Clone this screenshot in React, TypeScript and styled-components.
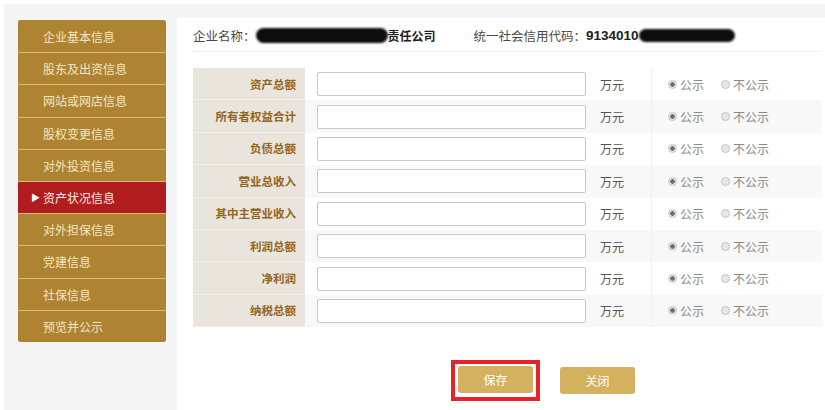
import React from "react";
import styled, { createGlobalStyle } from "styled-components";

const GlobalStyle = createGlobalStyle`
  html, body { margin: 0; padding: 0; background: #ffffff; }
  body {
    font-family: "Noto Sans CJK SC", "Noto Sans", "Liberation Sans", sans-serif;
    font-size: 12px;
    color: #333;
  }
  * { box-sizing: border-box; }
`;

const Frame = styled.div`
  width: 825px;
  height: 410px;
  padding: 4px 0 0 4px;
  background: #ffffff;
  overflow: hidden;
`;

const Shell = styled.div`
  display: flex;
  height: 406px;
  padding-top: 14px;
  background: #f5f5f5;
`;

const Sidebar = styled.aside`
  width: 173px;
  flex: none;
  padding: 2px 11px 0 14px;
`;

const Menu = styled.ul`
  list-style: none;
  margin: 0;
  padding: 0;
  width: 148px;
  border-radius: 3px;
  overflow: hidden;
  background: #ae8432;
`;

const MenuItem = styled.li<{ $active?: boolean }>`
  position: relative;
  height: 32.2px;
  display: flex;
  align-items: center;
  padding-left: 25px;
  font-size: 12px;
  color: ${(p) => (p.$active ? "#fbe9e4" : "#f4e4c2")};
  background: ${(p) => (p.$active ? "#b11c1f" : "#ae8432")};
  & + & {
    border-top: 1px solid #d9bb7c;
  }
`;

const Arrow = styled.span`
  position: absolute;
  left: 13px;
  font-size: 9px;
  color: #ffffff;
`;

const Main = styled.main`
  flex: 1;
  background: #ffffff;
  padding: 0 3px 0 16px;
`;

const Header = styled.div`
  height: 34px;
  display: flex;
  align-items: center;
  border-bottom: 1px solid #efefef;
  font-size: 12.5px;
  color: #4a4a4a;
  padding-top: 2px;
`;

const Field = styled.div<{ $gap?: number }>`
  display: flex;
  align-items: center;
  margin-right: ${(p) => p.$gap ?? 0}px;
`;

const Redacted = styled.span<{ $w: number; $h: number }>`
  display: inline-block;
  width: ${(p) => p.$w}px;
  height: ${(p) => p.$h}px;
  border-radius: ${(p) => p.$h / 2}px;
  background: #0d0d0d;
  filter: blur(1.2px);
`;

const Strong = styled.span`
  font-weight: 700;
  font-size: 12px;
  color: #222;
`;

const Digits = styled.span`
  font-family: "Liberation Sans", "Noto Sans", sans-serif;
  font-weight: 700;
  font-size: 13.5px;
  color: #222;
`;

const Table = styled.div`
  margin-top: 16px;
  width: 629px;
`;

const Row = styled.div<{ $alt?: boolean }>`
  display: grid;
  grid-template-columns: 112px 290px 56px 1fr;
  height: 32.4px;
  background: ${(p) => (p.$alt ? "#f8f8f8" : "#ffffff")};
`;

const Label = styled.div`
  display: flex;
  align-items: center;
  justify-content: flex-end;
  padding-right: 9px;
  background: #e9e4dc;
  border-bottom: 1px solid #f1ede7;
  color: #93661d;
  font-weight: 700;
  font-size: 11.5px;
`;

const InputCell = styled.div`
  display: flex;
  align-items: center;
  padding-left: 12px;
`;

const TextInput = styled.input`
  width: 269px;
  height: 24px;
  border: 1px solid #c9c9c9;
  border-radius: 2px;
  background: #ffffff;
  outline: none;
  padding: 0 4px;
`;

const Unit = styled.div`
  display: flex;
  align-items: center;
  padding-left: 5px;
  color: #555;
  font-size: 12px;
`;

const RadioCell = styled.div`
  display: flex;
  align-items: center;
  padding-left: 16px;
  border-left: 1px solid #f0f0f0;
  gap: 17px;
`;

const RadioLabel = styled.label`
  display: flex;
  align-items: center;
  gap: 3px;
  color: #8a8a8a;
  font-size: 12px;
`;

const RadioDot = styled.span<{ $checked?: boolean }>`
  width: 9px;
  height: 9px;
  border-radius: 50%;
  border: 1px solid #c4c4c4;
  background: ${(p) =>
    p.$checked ? "radial-gradient(circle, #6d6d6d 0 2px, #e9e9e9 2.5px)" : "#e6e6e6"};
`;

const ButtonBar = styled.div`
  display: flex;
  align-items: center;
  gap: 20px;
  margin-top: 33px;
  padding-left: 258px;
`;

const Highlight = styled.div`
  border: 4px solid #e8212b;
  padding: 2px 3px 4px 3px;
  background: #ffffff;
`;

const Button = styled.button`
  width: 75px;
  height: 27px;
  border: none;
  border-radius: 3px;
  background: #d3b15e;
  color: #ffffff;
  font-family: inherit;
  font-size: 12px;
  cursor: pointer;
`;

const menuItems = [
  "企业基本信息",
  "股东及出资信息",
  "网站或网店信息",
  "股权变更信息",
  "对外投资信息",
  "资产状况信息",
  "对外担保信息",
  "党建信息",
  "社保信息",
  "预览并公示",
];

const rows = [
  "资产总额",
  "所有者权益合计",
  "负债总额",
  "营业总收入",
  "其中主营业收入",
  "利润总额",
  "净利润",
  "纳税总额",
];

export default function App() {
  return (
    <>
      <GlobalStyle />
      <Frame>
        <Shell>
          <Sidebar>
            <Menu>
              {menuItems.map((m) => {
                const active = m === "资产状况信息";
                return (
                  <MenuItem key={m} $active={active}>
                    {active && <Arrow>▶</Arrow>}
                    {m}
                  </MenuItem>
                );
              })}
            </Menu>
          </Sidebar>
          <Main>
            <Header>
              <Field $gap={38}>
                企业名称：
                <Redacted $w={132} $h={15} />
                <Strong>责任公司</Strong>
              </Field>
              <Field>
                统一社会信用代码：
                <Digits>9134010</Digits>
                <Redacted $w={96} $h={13} />
              </Field>
            </Header>
            <Table>
              {rows.map((r, i) => (
                <Row key={r} $alt={i % 2 === 1}>
                  <Label>{r}</Label>
                  <InputCell>
                    <TextInput type="text" />
                  </InputCell>
                  <Unit>万元</Unit>
                  <RadioCell>
                    <RadioLabel>
                      <RadioDot $checked />
                      公示
                    </RadioLabel>
                    <RadioLabel>
                      <RadioDot />
                      不公示
                    </RadioLabel>
                  </RadioCell>
                </Row>
              ))}
            </Table>
            <ButtonBar>
              <Highlight>
                <Button>保存</Button>
              </Highlight>
              <Button>关闭</Button>
            </ButtonBar>
          </Main>
        </Shell>
      </Frame>
    </>
  );
}
